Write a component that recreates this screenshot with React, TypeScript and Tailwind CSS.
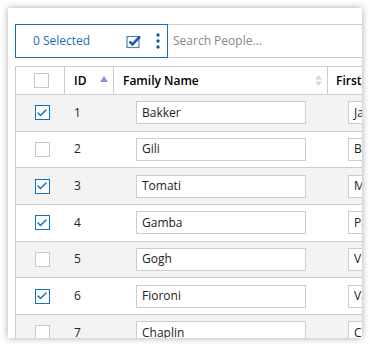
import { Check } from "lucide-react";

type Person = { id: number; family: string; first: string; selected: boolean };

const people: Person[] = [
  { id: 1, family: "Bakker", first: "Jan", selected: true },
  { id: 2, family: "Gili", first: "Bart", selected: false },
  { id: 3, family: "Tomati", first: "Mario", selected: true },
  { id: 4, family: "Gamba", first: "Paolo", selected: true },
  { id: 5, family: "Gogh", first: "Vincent", selected: false },
  { id: 6, family: "Fioroni", first: "Valentina", selected: true },
  { id: 7, family: "Chaplin", first: "Charlie", selected: false },
];

function Box({ checked }: { checked: boolean }) {
  return (
    <span
      className={
        checked
          ? "flex h-[15px] w-[15px] items-center justify-center border border-[#1570c2] bg-white"
          : "block h-[15px] w-[15px] border border-[#c8c8c8] bg-white"
      }
    >
      {checked ? <Check className="h-[12px] w-[12px] text-[#1570c2]" strokeWidth={3} /> : null}
    </span>
  );
}

export default function App() {
  return (
    <div className="h-[346px] w-[370px] bg-white p-2 font-['Open_Sans',sans-serif] text-[12px]">
      <div className="h-[330px] w-[354px] overflow-hidden bg-white pl-[7px] pt-[16px] shadow-[0_0_7px_rgba(0,0,0,0.35)]">
        <div className="flex h-[34px] w-[400px]">
          <div className="flex w-[153px] shrink-0 items-center border border-[#1570c2] pl-[17px] pr-[7px] text-[#1a6db8]">
            <span className="flex-1">0 Selected</span>
            <svg width="16" height="15" viewBox="0 0 16 15" className="mr-[14px]">
              <rect x="1" y="2.5" width="12" height="11" fill="none" stroke="#5a7fa8" strokeWidth="1.2" />
              <path d="M3.5 7.5 L6.5 10.5 L14 2.5" fill="none" stroke="#1560b0" strokeWidth="2.6" />
            </svg>
            <svg width="4" height="16" viewBox="0 0 4 16">
              <circle cx="2" cy="2" r="1.7" fill="#1a5a96" />
              <circle cx="2" cy="8" r="1.7" fill="#1a5a96" />
              <circle cx="2" cy="14" r="1.7" fill="#1a5a96" />
            </svg>
          </div>
          <div className="flex flex-1 items-center border-y border-[#cccccc] pl-[5px] text-[#888888]">
            Search People...
          </div>
        </div>

        <div className="mt-[8px] w-[460px] border-l border-[#cccccc]">
          <div className="flex h-[29px] border-y border-[#cccccc] font-semibold text-black">
            <div className="flex w-[49px] shrink-0 items-center justify-center border-r border-[#cccccc] pl-[3px]">
              <Box checked={false} />
            </div>
            <div className="flex w-[49px] shrink-0 items-center justify-between border-r border-[#cccccc] pl-[9px] pr-[5px]">
              <span>ID</span>
              <svg width="8" height="6" viewBox="0 0 8 6" className="-mt-[4px]">
                <path d="M4 0 L8 6 L0 6 Z" fill="#8c8ce0" />
              </svg>
            </div>
            <div className="flex w-[214px] shrink-0 items-center justify-between border-r border-[#cccccc] pl-[9px] pr-[5px]">
              <span>Family Name</span>
              <svg width="7" height="11" viewBox="0 0 7 11">
                <path d="M3.5 0 L7 4.5 L0 4.5 Z" fill="#d6d6d6" />
                <path d="M3.5 11 L7 6.5 L0 6.5 Z" fill="#d6d6d6" />
              </svg>
            </div>
            <div className="flex flex-1 items-center pl-[8px]">First Name</div>
          </div>

          {people.map((p) => (
            <div
              key={p.id}
              className={`flex h-[36.67px] border-b border-[#cccccc] text-[#222222] ${p.id % 2 === 1 ? "bg-[#f3f3f3]" : "bg-white"}`}
            >
              <div className="flex w-[49px] shrink-0 items-center justify-center pl-[3px]">
                <Box checked={p.selected} />
              </div>
              <div className="flex w-[49px] shrink-0 items-center pl-[9px]">{p.id}</div>
              <div className="flex w-[214px] shrink-0 items-center px-[22px]">
                <div className="flex h-[23px] w-full items-center border border-[#cccccc] bg-white pl-[5px]">
                  {p.family}
                </div>
              </div>
              <div className="flex flex-1 items-center pl-[20px]">
                <div className="flex h-[23px] w-[100px] items-center border border-[#cccccc] bg-white pl-[5px]">
                  {p.first}
                </div>
              </div>
            </div>
          ))}
        </div>
      </div>
    </div>
  );
}
